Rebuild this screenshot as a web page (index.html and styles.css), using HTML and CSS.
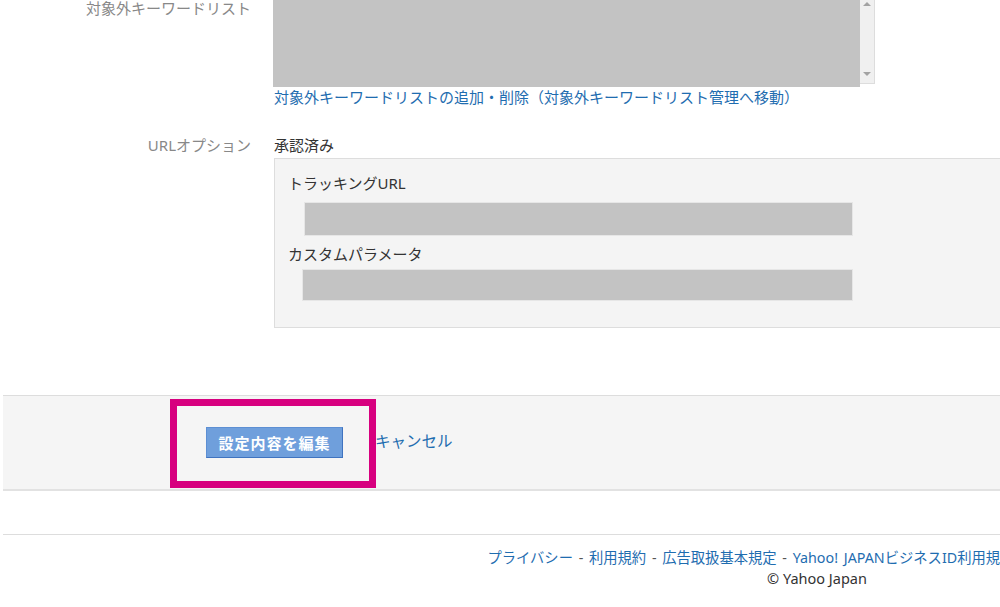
FILE: index.html
```html
<!DOCTYPE html>
<html lang="ja">
<head>
    <meta charset="utf-8">
    <title>キャンペーン設定</title>
    <link rel="stylesheet" href="styles.css">
</head>
<body>
    <div class="page">
        <div class="form">
            <div class="row">
                <div class="row-label">対象外キーワードリスト</div>
                <div class="row-body">
                    <div class="keyword-box">
                        <div class="redacted"></div>
                        <div class="scrollbar">
                            <span class="arrow up"></span>
                            <span class="arrow down"></span>
                        </div>
                    </div>
                    <a class="link" href="#">対象外キーワードリストの追加・削除（対象外キーワードリスト管理へ移動）</a>
                </div>
            </div>

            <div class="row row-url">
                <div class="row-label">URLオプション</div>
                <div class="row-body">
                    <div class="status">承認済み</div>
                    <div class="url-box">
                        <div class="url-label">トラッキングURL</div>
                        <div class="url-value tracking"></div>
                        <div class="url-label">カスタムパラメータ</div>
                        <div class="url-value params"></div>
                    </div>
                </div>
            </div>
        </div>

        <div class="actions">
            <button class="edit-btn" type="button">設定内容を編集</button>
            <a class="cancel" href="#">キャンセル</a>
            <div class="highlight"></div>
        </div>

        <div class="footer">
            <div class="footer-links">
                <a href="#">プライバシー</a> - <a href="#">利用規約</a> - <a href="#">広告取扱基本規定</a> - <a href="#">Yahoo! JAPANビジネスID利用規約</a> - <a href="#">推奨環境</a> - <a href="#">ヘルプ</a>
            </div>
            <div class="copyright">© Yahoo Japan</div>
        </div>
    </div>
</body>
</html>
```

FILE: styles.css
```css
html, body {
    margin: 0;
    padding: 0;
    overflow: hidden;
    background: #fff;
}
body {
    font-family: 'Noto Sans', 'Noto Sans CJK JP', sans-serif;
    font-size: 15px;
    line-height: 20px;
    color: #333;
}
a {
    color: #1f6db0;
    text-decoration: none;
}
.page {
    width: 1628px;
    margin-left: 3px;
}

/* form rows */
.form {
    margin-top: -2px;
}
.row {
    display: flex;
    gap: 23px;
}
.row-label {
    width: 248px;
    flex-shrink: 0;
    text-align: right;
    color: #888;
}
.row-body {
    flex: 1;
}
.row-url {
    margin-top: 28px;
}

/* keyword list textarea */
.keyword-box {
    display: flex;
    width: 602px;
    height: 89px;
    margin-left: -1px;
}
.redacted {
    width: 587px;
    background: #c3c3c3;
}
.scrollbar {
    position: relative;
    width: 14px;
    height: 85px;
    background: #f0f0f0;
    border-right: 1px solid #ddd;
    border-bottom: 1px solid #ddd;
}
.arrow {
    position: absolute;
    left: 3px;
    width: 0;
    height: 0;
    border-left: 4px solid transparent;
    border-right: 4px solid transparent;
}
.arrow.up {
    top: 4px;
    border-bottom: 4px solid #a3a3a3;
}
.arrow.down {
    top: 74px;
    border-top: 4px solid #a3a3a3;
}
.link {
    display: block;
}

/* url options */
.status {
    color: #333;
}
.url-box {
    margin-top: 3px;
    background: #f4f4f4;
    border: 1px solid #ddd;
    padding: 14px 0 26px 13px;
}
.url-label {
    color: #333;
}
.url-value {
    background: #c3c3c3;
    border: 1px solid #e6e6e6;
    box-sizing: border-box;
}
.url-value.tracking {
    width: 549px;
    height: 34px;
    margin: 9px 0 8px 16px;
}
.url-value.params {
    width: 551px;
    height: 32px;
    margin: 5px 0 0 14px;
}

/* action bar */
.actions {
    position: relative;
    display: flex;
    align-items: center;
    margin-top: 67px;
    height: 93px;
    padding-left: 203px;
    background: #f5f5f5;
    border-top: 1px solid #ddd;
    border-bottom: 2px solid #e2e2e2;
}
.edit-btn {
    width: 137px;
    height: 31px;
    padding: 0;
    background: #6f9fdc;
    color: #fff;
    border: 1px solid #5d8fd3;
    border-bottom-color: #3f73c0;
    border-right-color: #3f73c0;
    font-family: inherit;
    font-size: 15px;
    font-weight: bold;
    letter-spacing: 1px;
    cursor: pointer;
}
.cancel {
    margin-left: 32px;
    margin-top: -3px;
    font-size: 15.5px;
}
.highlight {
    position: absolute;
    left: 167px;
    top: 3px;
    width: 206px;
    height: 89px;
    box-sizing: border-box;
    border: 7px solid #d7007f;
}

/* footer */
.footer {
    margin-top: 43px;
    border-top: 1px solid #ddd;
    padding-top: 13px;
    text-align: center;
    font-size: 14px;
    color: #555;
}
.footer-links {
    font-size: 14.3px;
    word-spacing: 2px;
}
.copyright {
    color: #333;
    font-size: 14.5px;
}
```
